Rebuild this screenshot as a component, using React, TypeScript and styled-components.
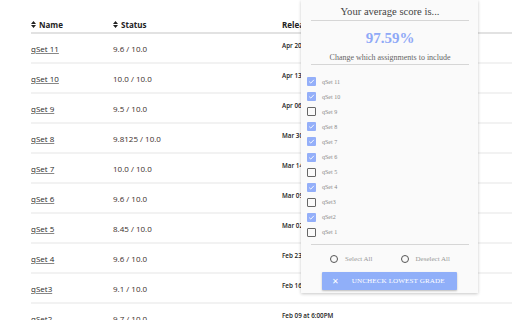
import React from "react";
import styled, { createGlobalStyle } from "styled-components";

const GlobalStyle = createGlobalStyle`
  html, body {
    margin: 0;
    padding: 0;
    background: #ffffff;
  }
  body {
    width: 512px;
    height: 320px;
    overflow: hidden;
    font-family: "Open Sans", "Liberation Sans", sans-serif;
  }
`;

const Page = styled.div`
  position: relative;
  width: 512px;
  height: 320px;
  overflow: hidden;
`;

const Table = styled.div`
  margin: 17px 0 0 31px;
  display: flex;
  flex-direction: column;
`;

const HeadRow = styled.div`
  display: grid;
  grid-template-columns: 82px 169px 1fr;
  height: 15px;
  align-items: center;
  border-bottom: 2px solid #e2e2e2;
  font-size: 8px;
  font-weight: 700;
  color: #222;
`;

const HeadCell = styled.div`
  display: flex;
  align-items: center;
  gap: 3px;
  white-space: nowrap;
`;

const Row = styled.div`
  display: grid;
  grid-template-columns: 82px 169px 1fr;
  height: 28px;
  align-items: center;
  border-bottom: 2px solid #f2f2f2;
  font-size: 8px;
  color: #333;
`;

const NameLink = styled.span`
  text-decoration: underline;
  text-decoration-color: #888;
  text-underline-offset: 1px;
  color: #2a2a2a;
`;

const Score = styled.span`
  color: #3a2e2a;
`;

const DateCell = styled.span`
  align-self: start;
  padding-top: 7px;
  font-size: 6.3px;
  font-weight: 600;
  color: #222;
  white-space: nowrap;
`;

const Panel = styled.div`
  position: absolute;
  left: 301px;
  top: 0;
  width: 177px;
  height: 293px;
  box-sizing: border-box;
  padding: 0 9px 0 10px;
  background: #fafafa;
  box-shadow: 0 1px 3px rgba(0, 0, 0, 0.22);
  font-family: "Liberation Serif", "Times New Roman", serif;
  display: flex;
  flex-direction: column;
`;

const Title = styled.div`
  text-align: center;
  font-size: 10.6px;
  color: #444;
  padding-top: 6px;
  height: 14px;
  border-bottom: 1px solid #d6d6d6;
`;

const Average = styled.div`
  text-align: center;
  font-size: 15px;
  font-weight: 700;
  color: #8fa9f7;
  padding-top: 9px;
  height: 17px;
`;

const Subtitle = styled.div`
  text-align: center;
  font-size: 8px;
  color: #666;
  padding-top: 6px;
  height: 11px;
  border-bottom: 1px solid #d6d6d6;
`;

const List = styled.div`
  display: flex;
  flex-direction: column;
  padding: 9px 0 4px;
  border-bottom: 1px solid #d6d6d6;
`;

const Item = styled.label`
  display: flex;
  align-items: center;
  height: 15.1px;
  gap: 6px;
  margin-left: -4px;
  font-size: 6px;
  color: #888;
`;

const Box = styled.span<{ $checked: boolean }>`
  width: 9px;
  height: 9px;
  box-sizing: border-box;
  border-radius: 1px;
  display: flex;
  align-items: center;
  justify-content: center;
  background: ${(p) => (p.$checked ? "#94aff9" : "transparent")};
  border: ${(p) => (p.$checked ? "none" : "1px solid #666")};
`;

const RadioRow = styled.div`
  display: flex;
  justify-content: center;
  gap: 28px;
  padding-top: 7px;
  height: 13px;
  font-size: 7px;
  color: #999;
`;

const Radio = styled.span`
  display: flex;
  align-items: center;
  gap: 7px;
`;

const Circle = styled.span`
  width: 8px;
  height: 8px;
  box-sizing: border-box;
  border: 1px solid #555;
  border-radius: 50%;
`;

const Button = styled.button`
  margin: 7px 0 0 11px;
  width: 135px;
  height: 18px;
  border: none;
  border-radius: 1px;
  background: #90aff9;
  color: #fff;
  font-family: "Liberation Serif", "Times New Roman", serif;
  font-size: 7.1px;
  letter-spacing: 0.1px;
  display: flex;
  align-items: center;
  padding: 0 0 0 10px;
  gap: 13px;
  box-shadow: 0 1px 2px rgba(0, 0, 0, 0.25);
`;

const Cross = styled.span`
  font-family: "DejaVu Sans", sans-serif;
  font-size: 8px;
`;

const SortIcon = () => (
  <svg width="5" height="7" viewBox="0 0 5 7">
    <path d="M2.5 0 L5 3 L0 3 Z M0 4 L5 4 L2.5 7 Z" fill="#222" />
  </svg>
);

const Check = () => (
  <svg width="7" height="7" viewBox="0 0 7 7">
    <path d="M1.2 3.6 L2.8 5.1 L5.9 1.8" stroke="#fff" strokeWidth="0.9" fill="none" />
  </svg>
);

const rows = [
  { name: "qSet 11", score: "9.6 / 10.0", date: "Apr 20" },
  { name: "qSet 10", score: "10.0 / 10.0", date: "Apr 13" },
  { name: "qSet 9", score: "9.5 / 10.0", date: "Apr 06" },
  { name: "qSet 8", score: "9.8125 / 10.0", date: "Mar 30" },
  { name: "qSet 7", score: "10.0 / 10.0", date: "Mar 14" },
  { name: "qSet 6", score: "9.6 / 10.0", date: "Mar 09" },
  { name: "qSet 5", score: "8.45 / 10.0", date: "Mar 02" },
  { name: "qSet 4", score: "9.6 / 10.0", date: "Feb 23" },
  { name: "qSet3", score: "9.1 / 10.0", date: "Feb 16" },
  { name: "qSet2", score: "9.7 / 10.0", date: "Feb 09 at 6:00PM" },
];

const assignments = [
  { name: "qSet 11", checked: true },
  { name: "qSet 10", checked: true },
  { name: "qSet 9", checked: false },
  { name: "qSet 8", checked: true },
  { name: "qSet 7", checked: true },
  { name: "qSet 6", checked: true },
  { name: "qSet 5", checked: false },
  { name: "qSet 4", checked: true },
  { name: "qSet3", checked: false },
  { name: "qSet2", checked: true },
  { name: "qSet 1", checked: false },
];

function App() {
  return (
    <Page>
      <GlobalStyle />
      <Table>
        <HeadRow>
          <HeadCell>
            <SortIcon />
            Name
          </HeadCell>
          <HeadCell>
            <SortIcon />
            Status
          </HeadCell>
          <HeadCell>Release</HeadCell>
        </HeadRow>
        {rows.map((r) => (
          <Row key={r.name}>
            <span>
              <NameLink>{r.name}</NameLink>
            </span>
            <Score>{r.score}</Score>
            <DateCell>{r.date}</DateCell>
          </Row>
        ))}
      </Table>
      <Panel>
        <Title>Your average score is...</Title>
        <Average>97.59%</Average>
        <Subtitle>Change which assignments to include</Subtitle>
        <List>
          {assignments.map((a) => (
            <Item key={a.name}>
              <Box $checked={a.checked}>{a.checked && <Check />}</Box>
              {a.name}
            </Item>
          ))}
        </List>
        <RadioRow>
          <Radio>
            <Circle />
            Select All
          </Radio>
          <Radio>
            <Circle />
            Deselect All
          </Radio>
        </RadioRow>
        <Button>
          <Cross>✕</Cross>
          UNCHECK LOWEST GRADE
        </Button>
      </Panel>
    </Page>
  );
}

export default App;
